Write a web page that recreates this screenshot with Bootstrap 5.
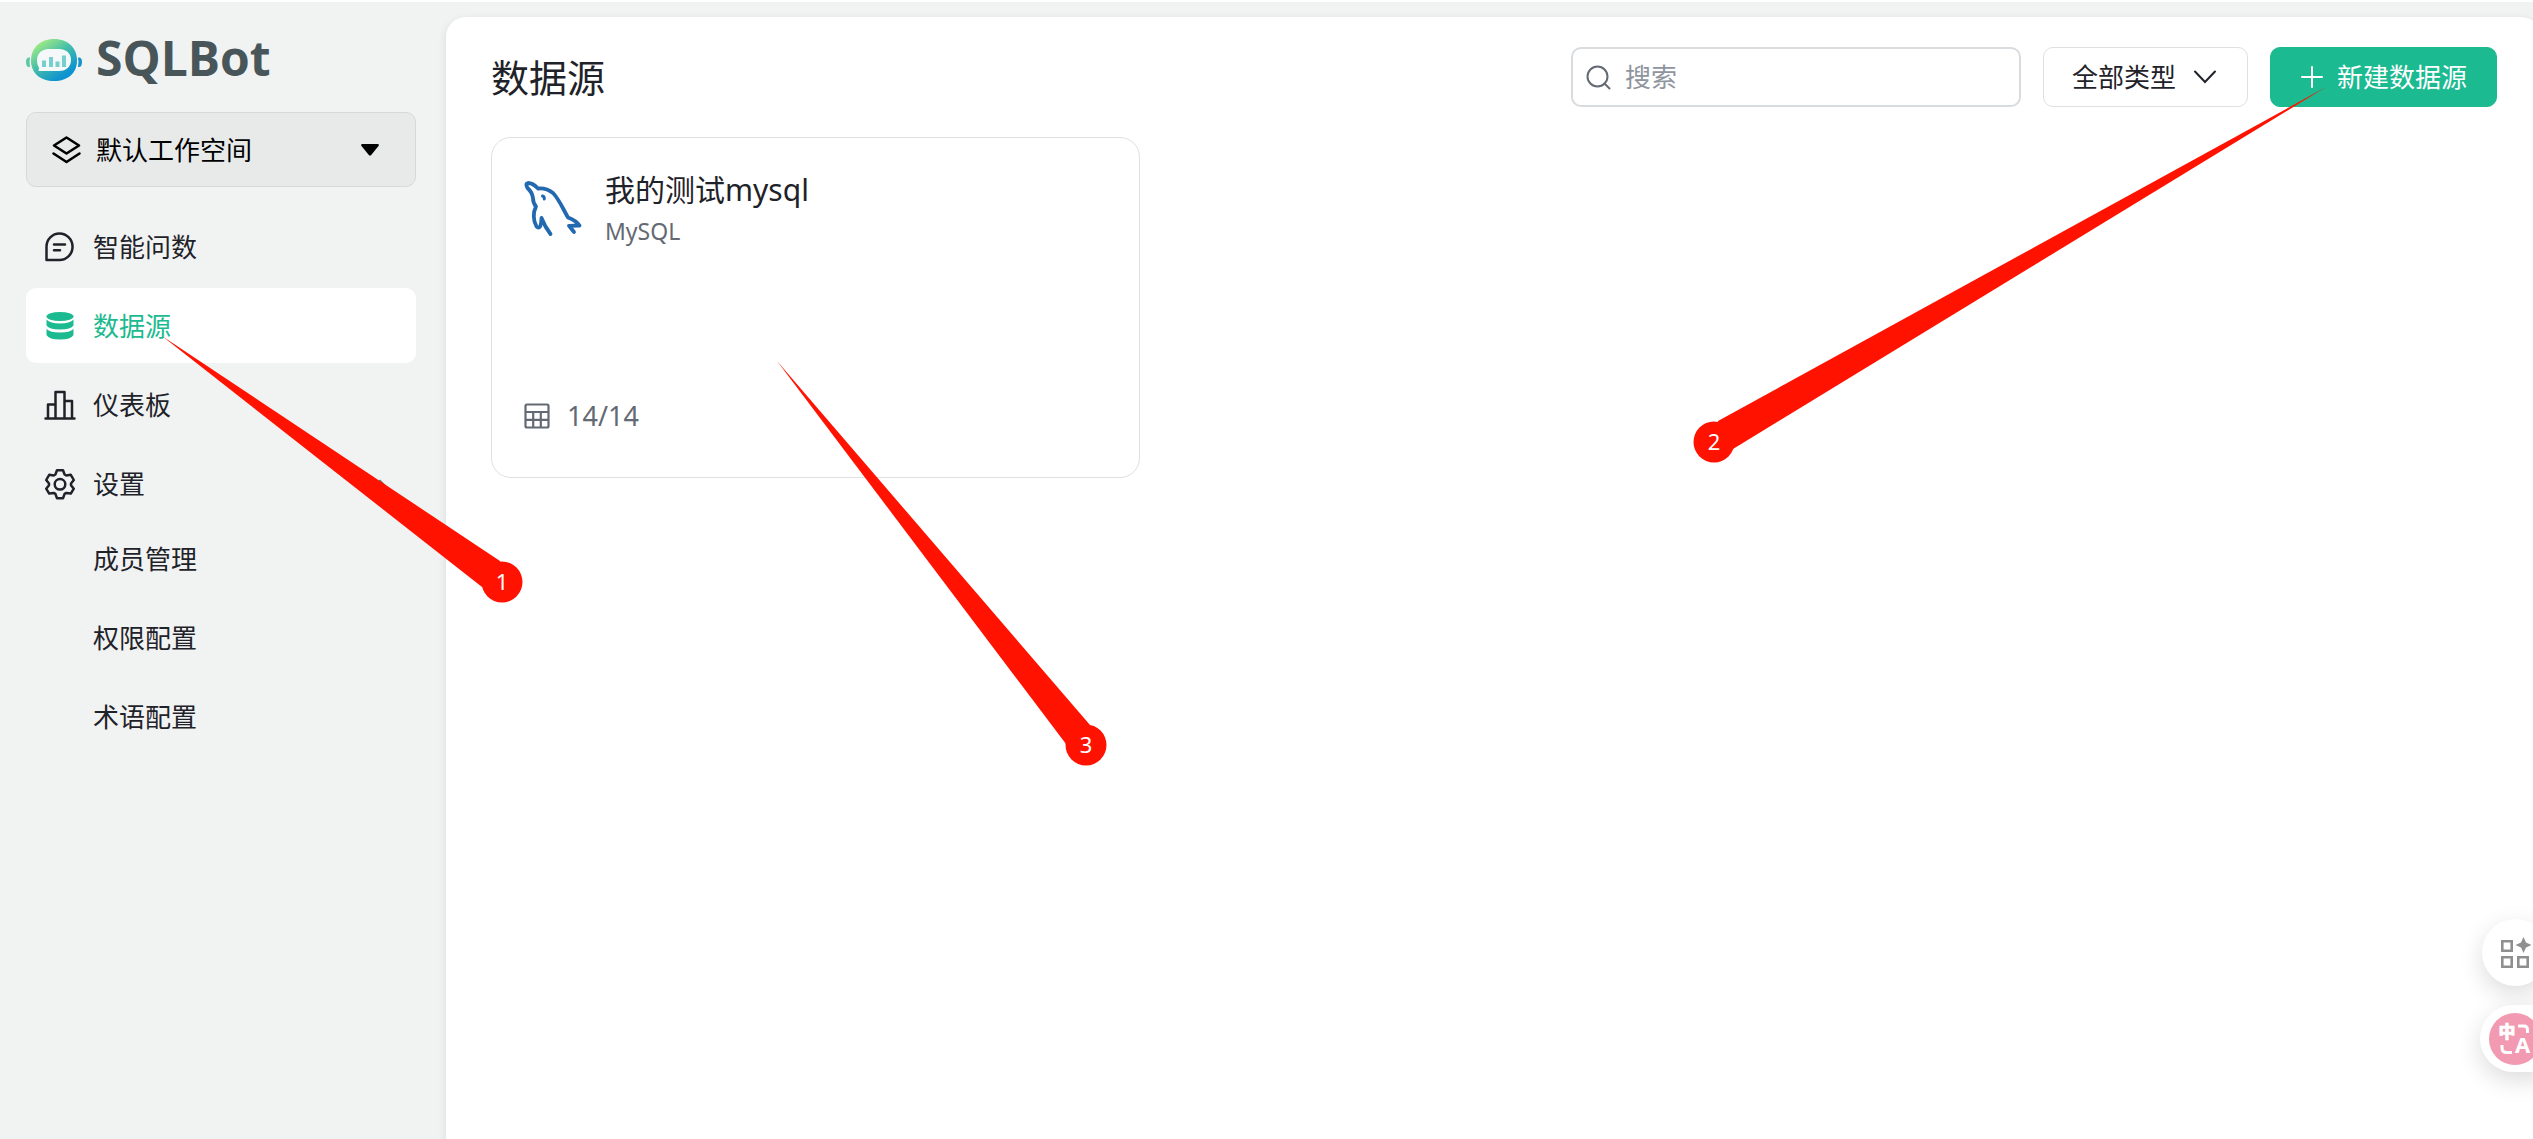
<!DOCTYPE html>
<html lang="zh-CN">
<head>
<meta charset="utf-8">
<meta name="viewport" content="width=device-width, initial-scale=1">
<title>SQLBot - 数据源</title>
<link href="https://cdn.jsdelivr.net/npm/bootstrap@5.3.0/dist/css/bootstrap.min.css" rel="stylesheet">
<style>
:root{--brand:#1cba90;--ink:#1f2329;--muted:#646a73;--line:#dee0e3}
body{font-family:"Noto Sans","Noto Sans CJK SC",sans-serif;font-size:26px;line-height:38px;color:var(--ink);background:#f1f3f3;border-top:2px solid #fff}
svg{display:block;flex:none}
.app-side{width:446px;padding:37px 30px 0 26px}
.brand-row{height:42px;gap:14px;margin-bottom:31px;color:#485559}
.brand-name{font-family:"Open Sans","Noto Sans",sans-serif;font-weight:700;font-size:48px;line-height:42px;margin-bottom:4px}
.space-box{height:75px;padding:0 36px 0 24px;gap:14px;background:#e8eaea;border:1px solid #d6d9d9;border-radius:10px;color:#000;margin-bottom:22px}
.plain-select{appearance:none;border:0;background:transparent;color:inherit;padding:0;outline:0}
.side-menu,.sub-menu{gap:4px}
.sub-menu{margin-top:-4px}
.side-menu a{height:75px;padding:0 28px 0 18px;gap:17px;border-radius:10px;color:var(--ink);text-decoration:none}
.side-menu a.active{background:#fff;color:var(--brand)}
.side-menu a.sub-item{padding-left:67px}
.app-main{margin:15px -8px 0 0;padding:30px 44px 30px 45px;background:#fff;border-radius:20px 20px 0 0;box-shadow:0 3px 8px rgba(31,35,41,.12)}
.tool-row{gap:22px;margin-bottom:30px}
.page-title{font-size:38px;line-height:60px;font-weight:400}
.search-box{width:450px;height:60px;padding:0 13px;gap:14px;border:2px solid #d9dcdf;border-radius:10px;background:#fff}
.search-box input{border:0;outline:0;min-width:0;padding:0;background:transparent}
.search-box input::placeholder{color:#8f959e;opacity:1}
.type-box{height:60px;padding:0 30px 0 28px;gap:16px;border:1px solid var(--line);border-radius:10px}
.btn-brand{--bs-btn-bg:var(--brand);--bs-btn-color:#fff;--bs-btn-border-color:var(--brand);--bs-btn-hover-bg:#18a57f;--bs-btn-hover-color:#fff;height:60px;padding:0 29px;gap:13px;font-size:26px;line-height:38px;border-radius:10px}
.source-card{width:649px;height:341px;padding:32px;border:1px solid var(--line);border-radius:20px}
.source-head{gap:22px}
.source-name{font-size:30px;line-height:40px;font-weight:400}
.source-kind{font-size:23px;line-height:42px;color:var(--muted)}
.source-foot{gap:17px;font-size:27px;line-height:38px;color:var(--muted);margin-bottom:10px}
.float-tools{right:-16px;bottom:67px;gap:19px}
.float-btn{width:67px;height:67px;border:0;border-radius:50%;background:#fff;box-shadow:0 8px 24px rgba(0,0,0,.14);padding:0}
.float-wide{width:69px;margin-left:-2px;border-radius:34px 0 0 34px}
.notes{left:0;top:0;pointer-events:none;margin-top:-2px}
</style>
<script src="https://cdn.jsdelivr.net/npm/bootstrap@5.3.0/dist/js/bootstrap.bundle.min.js"></script>
</head>
<body class="min-vh-100 d-flex position-relative overflow-hidden">

<aside class="app-side flex-shrink-0">
  <div class="brand-row d-flex align-items-center">
    <svg width="56" height="42" viewBox="0 0 56 42" aria-hidden="true">
      <defs><linearGradient id="lg" x1="0.1" y1="0" x2="0.85" y2="1"><stop offset="0" stop-color="#b5f57c"/><stop offset=".45" stop-color="#46bfa8"/><stop offset=".85" stop-color="#0d93cf"/></linearGradient></defs>
      <path d="M3 18.500Q0 18.500 0 23Q0 28 3 28L4 28Q3 23 4 18.500z" fill="#5cc7a5"/>
      <path d="M53 18.500Q56 18.500 56 23Q56 28 53 28L52 28Q53 23 52 18.500z" fill="#1494cc"/>
      <path fill="url(#lg)" d="M28 0C42 0 51 9 51 21.500S42 42 28 42S5 34 5 21.500S14 0 28 0z"/>
      <path fill="#f4f8f8" d="M23 10H33C41 10 45 15 45 21S41 32 33 32H12.500L13 28.500C11.500 26.500 11 24 11 21C11 15 15 10 23 10z"/>
      <path fill="#76cfcd" d="M16 21.500h4V28h-4zM23 18h4v10h-4zM29.500 22.500h4V28h-4zM36 16.500h4V28h-4z"/>
    </svg>
    <span class="brand-name">SQLBot</span>
  </div>

  <div class="space-box d-flex align-items-center">
    <svg width="31" height="30" viewBox="0 0 31 30" fill="none" stroke="#000" stroke-width="2.600" stroke-linejoin="round" stroke-linecap="round"><path d="M15.500 2.500L28 10.500L15.500 18.500L3 10.500z"/><path d="M2.500 18.500L15.500 27L28.500 18.500"/></svg>
    <select class="plain-select flex-grow-1" aria-label="工作空间"><option>默认工作空间</option></select>
    <svg width="18" height="12" viewBox="0 0 18 12"><path d="M1 0H17Q18.500 .5 17.500 2L10 11.200Q9 12 8 11.200L.5 2Q-.5 .5 1 0z"/></svg>
  </div>

  <nav class="side-menu d-flex flex-column">
    <a href="#" class="d-flex align-items-center">
      <svg width="32" height="32" viewBox="0 0 32 32" fill="none" stroke="currentColor" stroke-width="2.500" stroke-linejoin="round" stroke-linecap="round"><path d="M15.500 2.500A13 13.200 0 0 1 15.500 29H2.500V15.700A13 13.200 0 0 1 15.500 2.500z"/><path d="M10 13.500h11M10 19.200h6"/></svg>
      <span>智能问数</span></a>
    <a href="#" class="active d-flex align-items-center" aria-current="page">
      <svg width="32" height="32" viewBox="0 0 32 32" fill="currentColor"><ellipse cx="16" cy="6.500" rx="13.500" ry="4.600"/><path d="M2.500 9.500Q6 13.500 16 13.500T29.500 9.500V15.500Q27 19.500 16 19.500T2.500 15.500zM2.500 19Q6 22.500 16 22.500T29.500 19V25Q27 29.500 16 29.500T2.500 25z"/></svg>
      <span>数据源</span></a>
    <a href="#" class="d-flex align-items-center">
      <svg width="32" height="32" viewBox="0 0 32 32" fill="none" stroke="currentColor" stroke-width="2.500" stroke-linejoin="round" stroke-linecap="round"><path d="M1.500 29.500h29M4 29V15.500h7.500M11.500 29V3h9V29M20.500 12h7.500V29"/></svg>
      <span>仪表板</span></a>
    <a href="#" class="d-flex align-items-center">
      <svg width="32" height="32" viewBox="0 0 32 32" fill="none" stroke="currentColor" stroke-width="2.500" stroke-linejoin="round"><path d="M13 2.200H19L20.600 6.500L22.300 7.500L26.800 6.800L29.800 12L27 15.500V17.200L29.800 20.700L26.800 25.600L22.300 24.900L20.600 25.900L19 30.200H13L11.400 25.900L9.700 24.900L5.200 25.600L2.200 20.700L5 17.200V15.500L2.200 12L5.200 6.800L9.700 7.500L11.400 6.500z"/><circle cx="16" cy="16.300" r="5.300"/></svg>
      <span class="flex-grow-1">设置</span>
      <svg width="16" height="10" viewBox="0 0 16 10" fill="none" stroke="#646a73" stroke-width="2"><path d="M1 9L8 2L15 9"/></svg></a>
    <div class="sub-menu d-flex flex-column">
      <a href="#" class="sub-item d-flex align-items-center">成员管理</a>
      <a href="#" class="sub-item d-flex align-items-center">权限配置</a>
      <a href="#" class="sub-item d-flex align-items-center">术语配置</a>
    </div>
  </nav>
</aside>

<main class="app-main flex-grow-1">
  <div class="tool-row d-flex align-items-center">
    <h1 class="page-title mb-0 me-auto">数据源</h1>
    <label class="search-box d-flex align-items-center">
      <svg width="25" height="25" viewBox="0 0 25 25" fill="none" stroke="#646a73" stroke-width="2" stroke-linecap="round"><circle cx="11.500" cy="11.500" r="10"/><path d="M18.500 18.500L23.500 23.500"/></svg>
      <input class="flex-grow-1" type="text" placeholder="搜索" aria-label="搜索">
    </label>
    <div class="type-box d-flex align-items-center">
      <select class="plain-select" aria-label="类型"><option>全部类型</option></select>
      <svg width="24" height="14" viewBox="0 0 24 14" fill="none" stroke="#1f2329" stroke-width="2" stroke-linecap="round"><path d="M2 1.500L12 12L22 1.500"/></svg>
    </div>
    <button type="button" class="btn btn-brand d-flex align-items-center">
      <svg width="24" height="24" viewBox="0 0 24 24" stroke="#fff" stroke-width="2" stroke-linecap="round"><path d="M12 2V22M2 12H22"/></svg>
      <span>新建数据源</span>
    </button>
  </div>

  <article class="source-card d-flex flex-column justify-content-between">
    <div class="source-head d-flex">
      <svg class="mt-2" width="59" height="62" viewBox="0 0 59 62" fill="none" stroke="#2269b0" stroke-width="3.800" stroke-linecap="round" stroke-linejoin="round"><path d="M50 54L45 47.800L55.500 47.500Q52 42.500 44 39.500C39 31 35 21 29 15Q22 9.500 14 10.500Q9 5 4 5Q1 5.500 3.500 10Q8 14 9 20Q9 25 12 28.500C9 34 9 43 12.500 48.500Q17 53 17.500 40Q21 49 26.500 56"/><path d="M18.500 18Q20.500 18.500 20.300 21" stroke-width="3"/></svg>
      <div>
        <h2 class="source-name mb-0">我的测试mysql</h2>
        <div class="source-kind">MySQL</div>
      </div>
    </div>
    <div class="source-foot d-flex align-items-center">
      <svg width="26" height="26" viewBox="0 0 26 26" fill="none" stroke="#646a73" stroke-width="2.200"><rect x="1.500" y="1.500" width="23" height="23" rx="1.500"/><path d="M1.500 9H24.500M1.500 16.800H24.500M9.200 9V24.500M16.800 9V24.500"/></svg>
      <span>14/14</span>
    </div>
  </article>
</main>

<div class="float-tools position-absolute d-flex flex-column">
  <button type="button" class="float-btn d-flex align-items-center justify-content-center" aria-label="工具">
    <svg width="32" height="34" viewBox="0 0 32 34" fill="none" stroke="#8f8f8f" stroke-width="2.600"><path d="M2.300 5.300h9.400v9.400h-9.400zM2.300 21.300h9.400v9.400h-9.400zM18.300 21.300h9.400v9.400h-9.400z"/><path fill="#8f8f8f" stroke="none" d="M23.500 1L26 6.500L31.500 9L26 11.500L23.500 17L21 11.500L15.500 9L21 6.500z"/></svg>
  </button>
  <button type="button" class="float-btn float-wide d-flex align-items-center ps-2" aria-label="翻译">
    <svg width="54" height="54" viewBox="0 0 54 54"><circle cx="27" cy="27" r="26" fill="#f29ab1"/><path d="M30 14h6q3.500 0 3.500 4v3M14 33v3q0 4.500 5 4.500h5" fill="none" stroke="#fff" stroke-width="3"/><text x="10.500" y="26" font-size="17" font-weight="900" fill="#fff" stroke="#fff" stroke-width=".6">中</text><text x="27" y="41" font-size="22" font-weight="700" fill="#fff">A</text></svg>
  </button>
</div>

<svg class="notes position-absolute" width="2533" height="1139" viewBox="0 0 2533 1139" fill="#ff1200" font-size="22" text-anchor="middle">
  <path d="M162 336L500 561L502 582L482 587z"/><circle cx="502" cy="582" r="20.500"/><text x="502" y="590" fill="#fff">1</text>
  <path d="M2326 87L1718 421L1714 442L1733 449z"/><circle cx="1714" cy="442" r="20.500"/><text x="1714" y="450" fill="#fff">2</text>
  <path d="M777 361L1090 725L1086 745L1066 744z"/><circle cx="1086" cy="745" r="20.500"/><text x="1086" y="753" fill="#fff">3</text>
</svg>
</body>
</html>
